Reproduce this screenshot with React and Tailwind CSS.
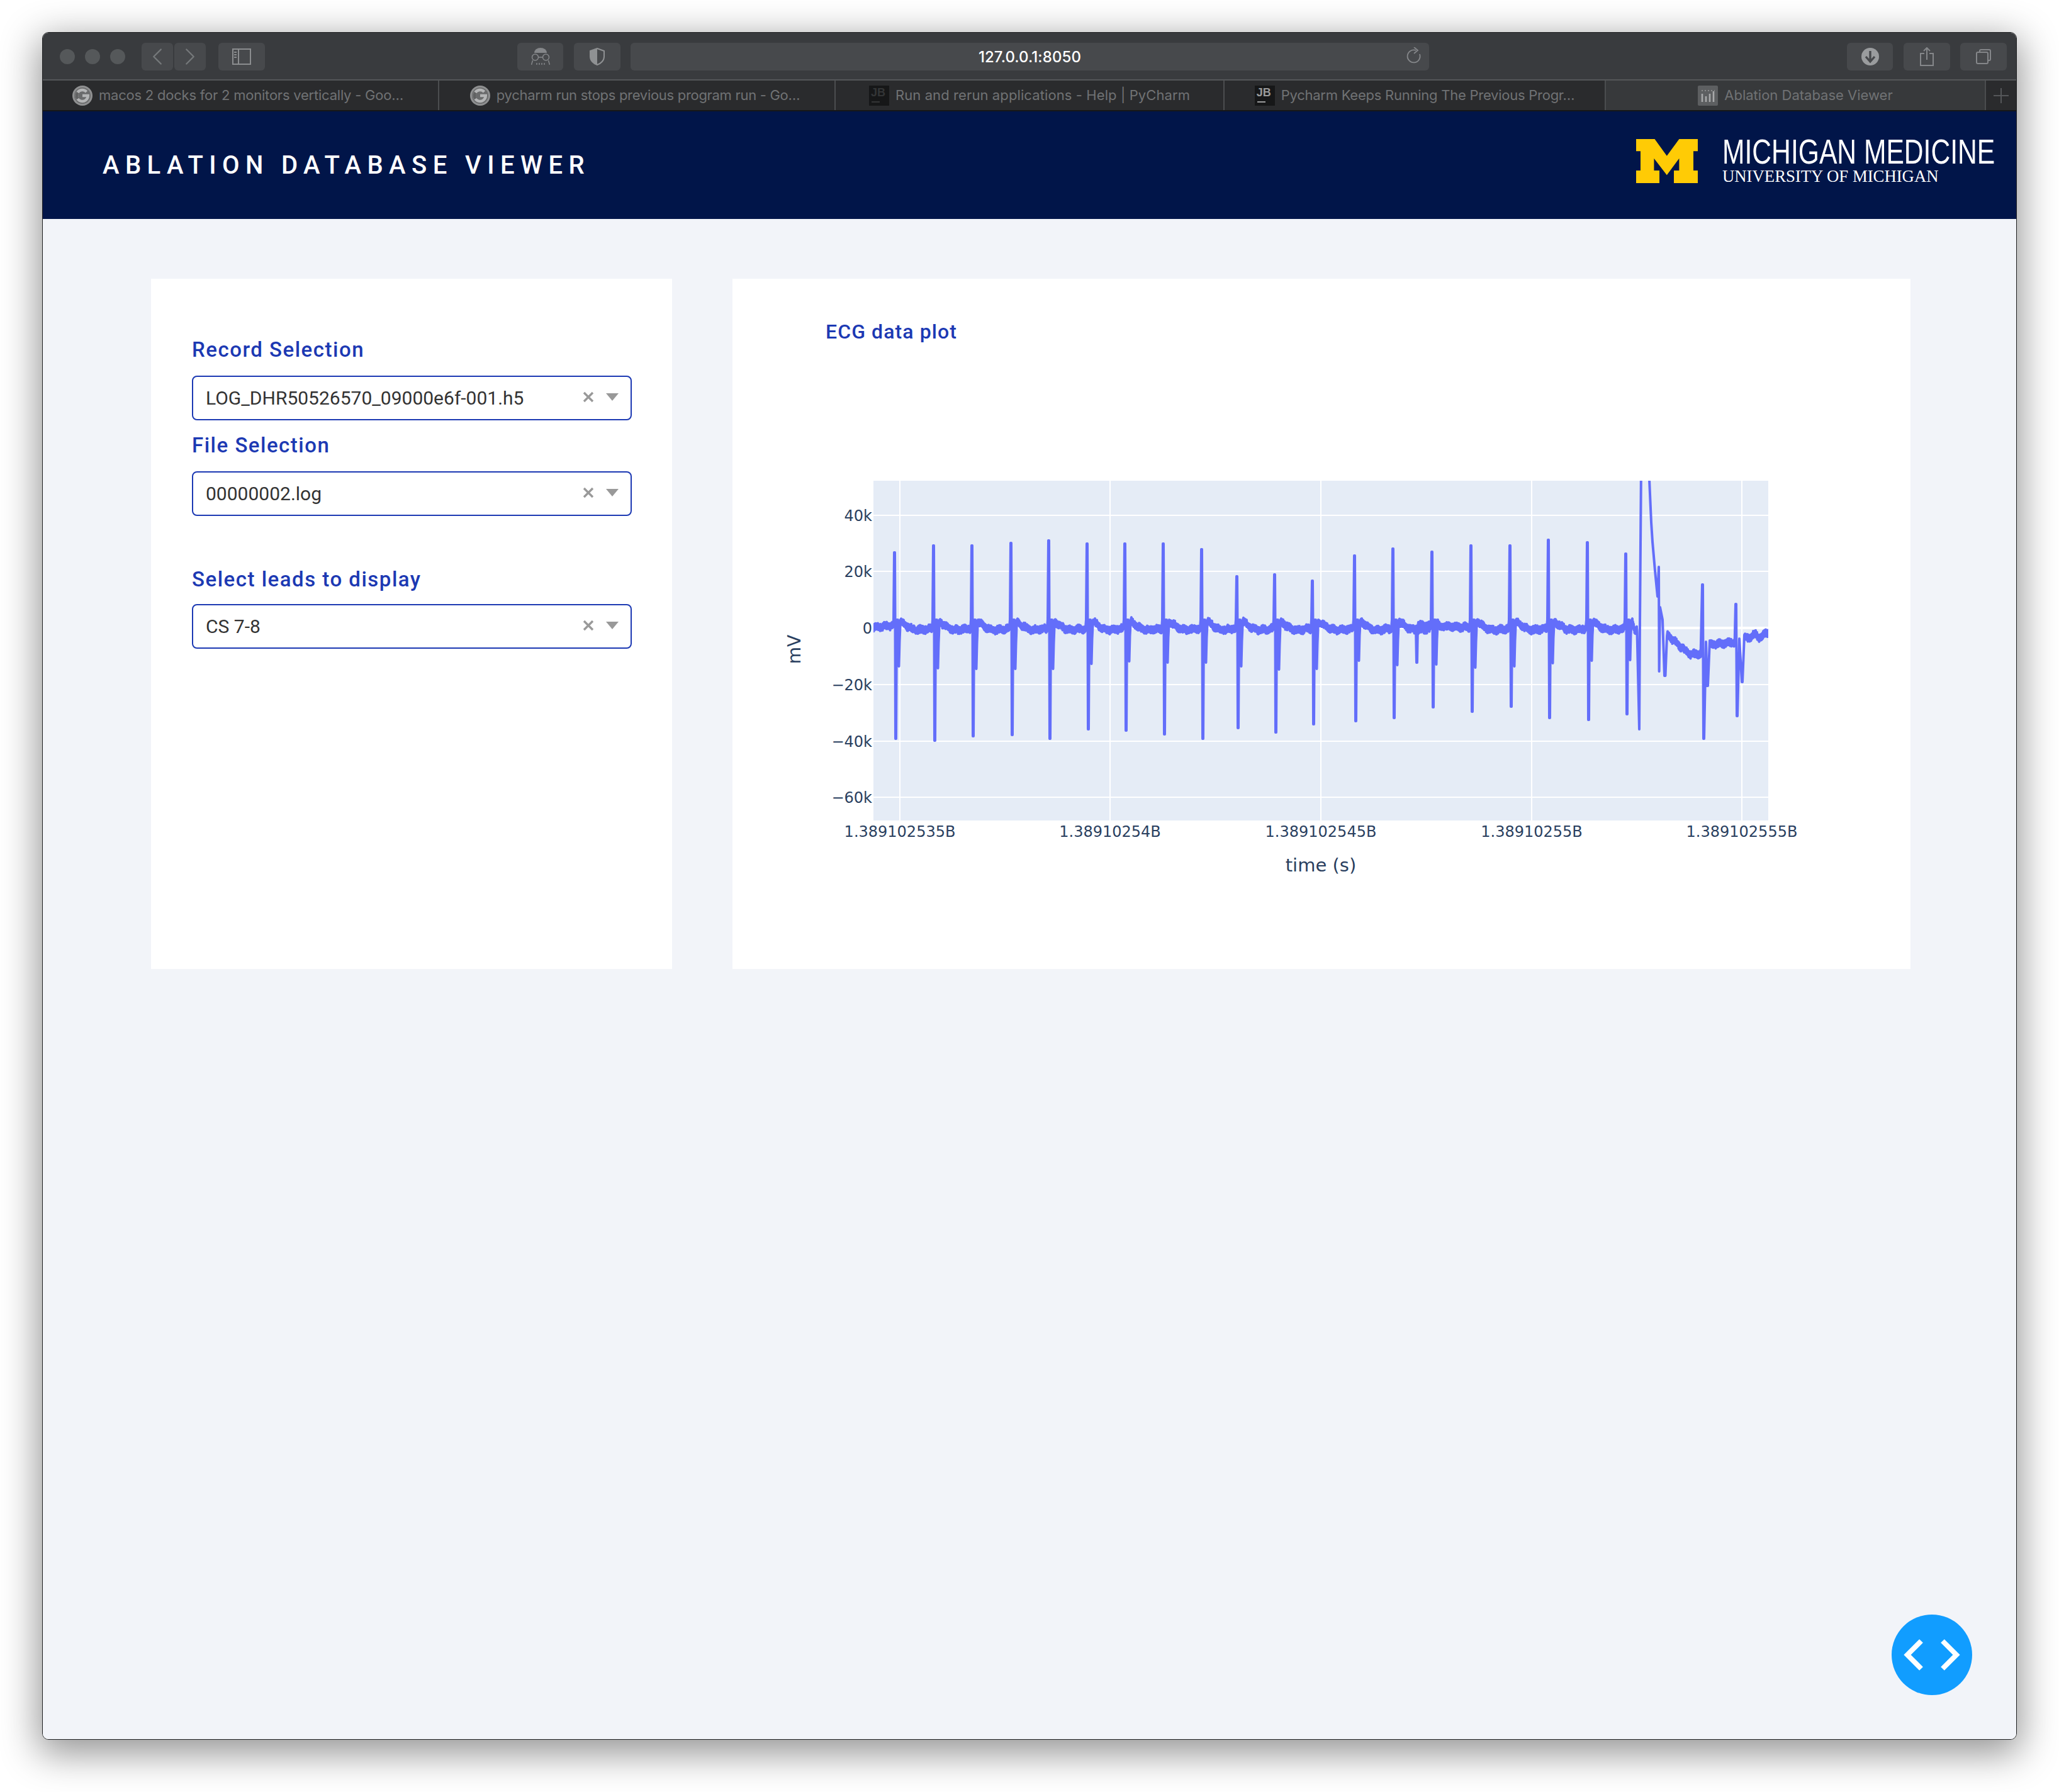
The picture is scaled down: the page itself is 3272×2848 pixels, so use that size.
import { ChevronLeft, ChevronRight } from "lucide-react";

const PLOT_W = 1422;
const PLOT_H = 540;

// beat = [x, top of R wave, bottom of S wave, bottom of second dip], page px
const BEATS = [
  [1421, 878, 1174, 1059], [1483, 867, 1177, 1062], [1544, 867, 1170, 1063],
  [1606, 863, 1168, 1063], [1666, 859, 1174, 1063], [1727, 864, 1159, 1055],
  [1787, 864, 1161, 1051], [1848, 864, 1167, 1053], [1909, 873, 1174, 1053],
  [1965, 916, 1157, 1059], [2025, 913, 1164, 1064], [2085, 923, 1151, 1063],
  [2152, 883, 1146, 1050], [2213, 872, 1141, 1057], [2275, 877, 1124, 1056],
  [2337, 867, 1131, 1061], [2399, 867, 1123, 1059], [2460, 858, 1141, 1054],
  [2522, 862, 1144, 1050], [2583, 880, 1135, 1049],
];

function buildTrace() {
  let seed = 7;
  let flip = 1;
  const rnd = () => {
    seed = (seed * 16807) % 2147483647;
    return seed / 2147483647 - 0.5;
  };
  const pts = [];
  const add = (x, y) => pts.push(`${(x - 1388).toFixed(1)},${(y - 764).toFixed(1)}`);
  // the recording is noisy enough that the baseline reads as a thick band
  const noisy = (from, to, base) => {
    for (let x = from; x < to; x += 0.5) {
      const t = (x - from) / (to - from);
      flip = -flip;
      add(x, base(t) + flip * 4.5 + rnd() * 3 + 1.5 * Math.sin(x * 0.45));
    }
  };
  const wave = (t) => 988 + 13 * Math.sin(Math.min(t * 1.9, 1) * Math.PI * 0.5) - 5 * Math.max(0, t - 0.6);

  noisy(1388, 1419, (t) => 997 - 3 * t);
  BEATS.forEach(([x, top, bottom, dip], i) => {
    add(x - 1, 985);
    add(x, top);
    add(x + 1, top);
    add(x + 1.5, 990);
    add(x + 2, bottom);
    add(x + 3, bottom);
    add(x + 4, 985);
    add(x + 6, 985);
    add(x + 7.5, dip);
    add(x + 8.5, dip - 40);
    add(x + 10, 985);
    const next = i < BEATS.length - 1 ? BEATS[i + 1][0] : 2604;
    if (i === 14) {
      noisy(x + 11, 2250, wave);
      add(2250, 995);
      add(2251, 1053);
      add(2252, 1053);
      add(2253, 995);
      noisy(2254, next - 2, (t) => 994 + 3 * t);
    } else {
      noisy(x + 11, next - 2, wave);
    }
  });
  // the big artefact, then the slow return to baseline
  add(2605, 1159);
  add(2606, 990);
  add(2608, 740);
  add(2620, 740);
  add(2624, 830);
  add(2626, 861);
  add(2630, 907);
  add(2634, 948);
  add(2636, 901);
  add(2636.6, 1067);
  add(2638, 965);
  add(2642, 985);
  add(2645, 1074);
  add(2646.5, 1074);
  add(2649, 1011);
  noisy(2650, 2703, (t) => 1010 + 32 * Math.min(t * 1.5, 1) - 3 * t);
  add(2705, 929);
  add(2706, 929);
  add(2707, 1174);
  add(2708, 1174);
  add(2711, 1020);
  add(2713, 1090);
  add(2714, 1090);
  add(2717, 1018);
  noisy(2718, 2757, (t) => 1024 - 3 * t);
  add(2758, 960);
  add(2759, 960);
  add(2760, 1138);
  add(2761, 1138);
  add(2764, 1015);
  add(2768, 1084);
  add(2769, 1084);
  add(2772, 1009);
  noisy(2773, 2810, (t) => 1012 + 3 * Math.sin(t * 12) - 4 * t * t);
  return pts.join(" ");
}

const TRACE = buildTrace();

function EcgPlot() {
  const yTicks = [
    ["40k", 55],
    ["20k", 144],
    ["0", 234],
    ["\u221220k", 324],
    ["\u221240k", 414],
    ["\u221260k", 503],
  ];
  const xTicks = [
    ["1.389102535B", 42],
    ["1.38910254B", 376],
    ["1.389102545B", 711],
    ["1.38910255B", 1046],
    ["1.389102555B", 1380],
  ];
  return (
    <svg viewBox="-150 -10 1800 680" width="1800" height="680" className="block" fontFamily="'DejaVu Sans', sans-serif" fill="#2a3f5f">
      <defs>
        <clipPath id="plotclip">
          <rect x="0" y="0" width={PLOT_W} height={PLOT_H} />
        </clipPath>
      </defs>
      <rect x="0" y="0" width={PLOT_W} height={PLOT_H} fill="#e5ecf6" />
      {xTicks.map(([, x]) => (
        <line key={x} x1={x} x2={x} y1="0" y2={PLOT_H} stroke="#fff" strokeWidth="2" />
      ))}
      {yTicks.map(([, y]) => (
        <line key={y} x1="0" x2={PLOT_W} y1={y} y2={y} stroke="#fff" strokeWidth={y === 234 ? 4 : 2} />
      ))}
      <polyline points={TRACE} fill="none" stroke="#636efa" strokeWidth="4" strokeLinejoin="round" clipPath="url(#plotclip)" />
      {yTicks.map(([label, y]) => (
        <text key={label} x="-2" y={y + 9} textAnchor="end" fontSize="24">{label}</text>
      ))}
      {xTicks.map(([label, x]) => (
        <text key={label} x={x} y="566" textAnchor="middle" fontSize="24">{label}</text>
      ))}
      <text x="711" y="621" textAnchor="middle" fontSize="29">time (s)</text>
      <text transform="translate(-116 268) rotate(-90)" textAnchor="middle" fontSize="28">mV</text>
    </svg>
  );
}

function Dropdown({ value }) {
  return (
    <div className="flex h-[71px] items-center rounded-lg border-2 border-[#1c39b3] bg-white pl-[20px] pr-[19px]">
      <span className="flex-1 text-[30px] text-[#333] font-['Roboto',sans-serif]">{value}</span>
      <svg width="18" height="18" viewBox="0 0 18 18" className="mr-[19px] mb-1">
        <path d="M2 2 L16 16 M16 2 L2 16" stroke="#999" strokeWidth="3.4" />
      </svg>
      <svg width="20" height="12" viewBox="0 0 20 12" className="mb-1">
        <path d="M0 0 H20 L10 12 Z" fill="#999" />
      </svg>
    </div>
  );
}

function Label({ className, children }) {
  return (
    <div className={`h-[40px] pt-[1px] leading-[40px] font-medium text-[#1c39b3] font-['Roboto',sans-serif] ${className}`}>
      {children}
    </div>
  );
}

function ToolButton({ className, children }) {
  return (
    <div className={`flex h-[44px] items-center justify-center rounded-[6px] bg-[#47494c] ${className}`}>
      {children}
    </div>
  );
}

function GoogleIcon() {
  return (
    <svg width="32" height="32" viewBox="0 0 32 32" className="shrink-0" fill="none">
      <circle cx="16" cy="16" r="16" fill="#8f9091" />
      <circle cx="16" cy="16" r="13" fill="#6a6b6c" />
      <path d="M22.5 10 A9 9 0 1 0 24.8 16 H16" stroke="#b4b5b6" strokeWidth="4.4" />
      <path d="M8.5 11 A9 9 0 0 0 8.5 21" stroke="#606162" strokeWidth="4.4" />
    </svg>
  );
}

function JbIcon({ dark }) {
  return (
    <div className={`relative h-[32px] w-[32px] shrink-0 bg-[#161718] text-[18px] font-bold leading-[22px] pl-[3px] font-['Liberation_Sans',sans-serif] ${dark ? "text-[#333536]" : "text-[#9a9b9c]"}`}>
      JB
      <div className={`absolute bottom-[5px] left-[4px] h-[2px] w-[13px] ${dark ? "bg-[#333536]" : "bg-[#9a9b9c]"}`} />
    </div>
  );
}

function ChartIcon() {
  return (
    <svg width="32" height="32" viewBox="0 0 32 32" className="shrink-0">
      <rect width="32" height="32" rx="2" fill="#5d5f61" />
      <path d="M7 13 V26 M13 17 V26 M19 13 V26 M25 9 V26" stroke="#a8a9aa" strokeWidth="2.6" />
      <path d="M6 8 H27" stroke="#8a8b8c" strokeWidth="2" strokeDasharray="2 3" />
    </svg>
  );
}

function Tab({ width, active, icon, tracking, children }) {
  return (
    <div className={`flex h-full items-center justify-center gap-[10px] border-r-2 border-[#4b4d4f] ${width} ${active ? "bg-[#37393b]" : ""}`}>
      {icon}
      <span className={`whitespace-nowrap text-[22px] text-[#707274] font-['Inter',sans-serif] ${tracking}`}>{children}</span>
    </div>
  );
}

export default function App() {
  return (
    <div className="min-h-[2848px] w-[3272px] bg-white pl-[67px] pt-[51px]">
      <div className="flex h-[2714px] w-[3138px] flex-col overflow-hidden rounded-[10px] border border-[#1d1e20] shadow-[0_16px_60px_6px_rgba(0,0,0,0.42)]">
        {/* safari toolbar */}
        <div className="flex h-[76px] shrink-0 items-center border-b-2 border-[#555759] bg-[#393b3e] pl-[27px] pt-[2px]">
          <div className="flex gap-[16px]">
            <div className="h-[24px] w-[24px] rounded-full bg-[#55585a]" />
            <div className="h-[24px] w-[24px] rounded-full bg-[#55585a]" />
            <div className="h-[24px] w-[24px] rounded-full bg-[#55585a]" />
          </div>
          <ToolButton className="ml-[26px] w-[50px]">
            <ChevronLeft size={46} strokeWidth={1.2} className="text-[#75787a]" />
          </ToolButton>
          <ToolButton className="ml-[2px] w-[50px]">
            <ChevronRight size={46} strokeWidth={1.2} className="text-[#75787a]" />
          </ToolButton>
          <ToolButton className="ml-[20px] w-[74px]">
            <svg width="30" height="26" viewBox="0 0 30 26" fill="none" stroke="#8b8d8f" strokeWidth="2">
              <rect x="1" y="1" width="28" height="24" />
              <path d="M10 1 V25" />
              <path d="M3 6 H7 M3 10 H7 M3 14 H7" strokeWidth="2" />
            </svg>
          </ToolButton>
          <ToolButton className="ml-[401px] w-[73px]">
            <svg width="30" height="28" viewBox="0 0 30 28" fill="none" stroke="#85878a" strokeWidth="1.5">
              <path d="M5 8 A10 8 0 0 1 25 8 Z" fill="#85878a" stroke="none" />
              <circle cx="6.5" cy="15" r="5" />
              <circle cx="23.5" cy="15" r="5" />
              <path d="M11.5 15 H18.5 M2.5 20 L0.5 27 M27.5 20 L29.5 27 M9 24 V27 M13 24 V27 M17 24 V27 M21 24 V27" />
            </svg>
          </ToolButton>
          <ToolButton className="ml-[17px] w-[74px]">
            <svg width="24" height="28" viewBox="0 0 24 28" fill="none">
              <path d="M12 1 L23 5 V14 C23 20 18 25 12 27 C6 25 1 20 1 14 V5 Z" stroke="#8f9193" strokeWidth="2" />
              <path d="M12 1 L1 5 V14 C1 20 6 25 12 27 Z" fill="#8f9193" />
            </svg>
          </ToolButton>
          <ToolButton className="relative ml-[16px] w-[1269px]">
            <span className="mt-[2px] text-[24px] font-medium tracking-[0.1px] text-white font-['Inter',sans-serif]">127.0.0.1:8050</span>
            <svg width="26" height="30" viewBox="0 0 26 30" fill="none" stroke="#85878a" strokeWidth="1.8" className="absolute right-[11px] top-[7px]">
              <path d="M16 5 A10 10 0 1 0 22 11" />
              <path d="M13 0 L19 5 L13 10" />
            </svg>
          </ToolButton>
          <ToolButton className="ml-[664px] w-[73px]">
            <svg width="28" height="28" viewBox="0 0 28 28">
              <circle cx="14" cy="14" r="14" fill="#9a9c9e" />
              <path d="M14 5 V21 M7 14 L14 22 L21 14" fill="none" stroke="#47494c" strokeWidth="3.4" />
            </svg>
          </ToolButton>
          <ToolButton className="ml-[17px] w-[74px]">
            <svg width="22" height="30" viewBox="0 0 22 30" fill="none" stroke="#85878a" strokeWidth="2">
              <path d="M11 1 V20 M6 6 L11 1 L16 6" />
              <path d="M7 10 H1 V29 H21 V10 H15" />
            </svg>
          </ToolButton>
          <ToolButton className="ml-[16px] w-[74px]">
            <svg width="24" height="24" viewBox="0 0 24 24" fill="none" stroke="#85878a" strokeWidth="2">
              <path d="M6 5 V3 Q6 1 8 1 H21 Q23 1 23 3 V16 Q23 18 21 18 H20" />
              <rect x="1" y="5" width="18" height="18" rx="2" />
            </svg>
          </ToolButton>
        </div>

        {/* tab strip */}
        <div className="flex h-[49px] shrink-0 items-center border-b-2 border-[#151618] bg-[#2a2b2d]">
          <Tab width="w-[630px] pr-[8px]" tracking="tracking-[-0.22px]" icon={<GoogleIcon />}>macos 2 docks for 2 monitors vertically - Goo…</Tab>
          <Tab width="w-[630px] pr-[6px]" tracking="tracking-[-0.3px]" icon={<GoogleIcon />}>pycharm run stops previous program run - Go…</Tab>
          <Tab width="w-[618px]" tracking="tracking-[0.1px]" icon={<JbIcon dark />}>Run and rerun applications - Help | PyCharm</Tab>
          <Tab width="w-[606px]" tracking="tracking-[-0.25px]" icon={<JbIcon />}>Pycharm Keeps Running The Previous Progr…</Tab>
          <Tab width="w-[604px]" tracking="tracking-normal" active icon={<ChartIcon />}>Ablation Database Viewer</Tab>
          <div className="flex flex-1 items-center justify-center">
            <svg width="24" height="24" viewBox="0 0 24 24" stroke="#55575a" strokeWidth="2">
              <path d="M12 0 V24 M0 12 H24" />
            </svg>
          </div>
        </div>

        {/* page header */}
        <div className="flex h-[171px] shrink-0 items-center justify-between bg-[#011549] pl-[95px]">
          <div className="text-[40px] font-medium tracking-[9.4px] text-white font-['Roboto',sans-serif]">
            ABLATION DATABASE VIEWER
          </div>
          <div className="mb-[14px] flex h-[70px] w-[604px] items-stretch">
            <svg width="98" height="70" viewBox="0 0 98 70" className="shrink-0">
              <path d="M0 0 H29.5 L48.8 26.7 L68.4 0 H98 V19.3 H91 V50 H98 V70 H60 V50 H68.4 V30.7 L48.8 57.3 L28.4 30.7 V50 H37 V70 H0 V50 H7 V19.3 H0 Z" fill="#ffcb05" />
            </svg>
            <div className="ml-[19px] w-[2px] bg-[#c8ccd6]" />
            <div className="ml-[20px] flex flex-col text-white">
              <div className="h-[44px] origin-left scale-x-[0.761] whitespace-nowrap text-[56px] leading-[40px] font-['Liberation_Sans',sans-serif]">
                MICHIGAN MEDICINE
              </div>
              <div className="h-[26px] origin-left scale-x-[0.99] whitespace-nowrap text-[27px] leading-[30px] font-['Liberation_Serif',serif]">
                UNIVERSITY OF MICHIGAN
              </div>
            </div>
          </div>
        </div>

        {/* page body */}
        <div className="relative flex flex-1 items-start gap-[96px] bg-[#f2f4f9] pl-[172px] pt-[95px]">
          <div className="h-[1097px] w-[828px] bg-white pl-[65px] pr-[64px] pt-[92px]">
            <Label className="mb-[22px] text-[33px] tracking-[1.5px]">Record Selection</Label>
            <Dropdown value="LOG_DHR50526570_09000e6f-001.h5" />
            <Label className="mb-[22px] mt-[19px] text-[33px] tracking-[1.5px]">File Selection</Label>
            <Dropdown value="00000002.log" />
            <Label className="mb-[20px] mt-[80px] text-[33px] tracking-[1.5px]">Select leads to display</Label>
            <Dropdown value="CS 7-8" />
          </div>
          <div className="h-[1097px] w-[1872px] bg-white">
            <Label className="ml-[148px] mt-[63px] text-[32px] tracking-[1.1px]">ECG data plot</Label>
            <div className="ml-[74px] mt-[208px]">
              <EcgPlot />
            </div>
          </div>

          {/* dash debug button */}
          <div className="absolute bottom-[70px] right-[70px] flex h-[128px] w-[128px] items-center justify-center rounded-full bg-[#119dff]">
            <svg width="128" height="128" viewBox="0 0 128 128" fill="none" stroke="#fff" strokeWidth="8">
              <path d="M47 42 L25 64 L47 86" />
              <path d="M81 42 L103 64 L81 86" />
            </svg>
          </div>
        </div>
      </div>
    </div>
  );
}
